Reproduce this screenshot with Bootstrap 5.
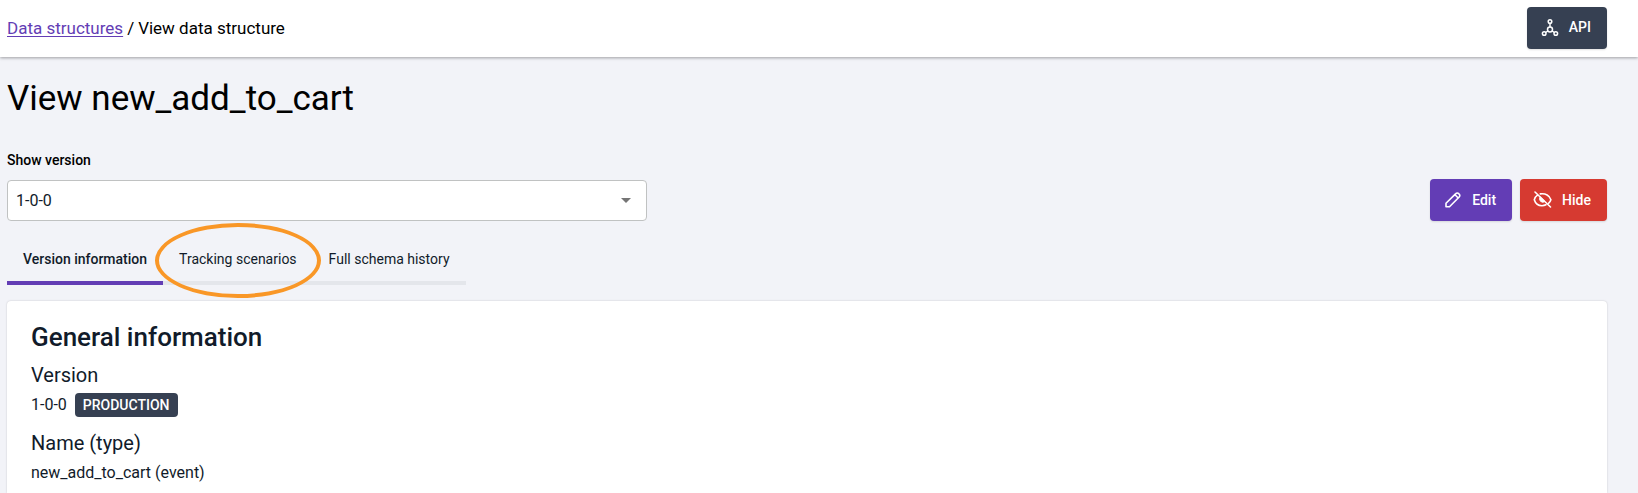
<!DOCTYPE html>
<html lang="en">
<head>
<meta charset="utf-8">
<meta name="viewport" content="width=device-width, initial-scale=1">
<title>View data structure</title>
<link rel="stylesheet" href="https://cdn.jsdelivr.net/npm/bootstrap@5.3.0/dist/css/bootstrap.min.css">
<style>
  body { font-family: Roboto, "Liberation Sans", sans-serif; font-size: 16px; line-height: 24px; color: #111b2a; background: #f2f3f8; }
  .topbar { height: 57px; padding-bottom: 2px; box-shadow: 0 1px 3px rgba(0,0,0,.35); }
  .page-x { padding-left: 7px; padding-right: 31px; }
  .crumbs { font-size: 17px; color: #000; }
  .crumbs .breadcrumb { --bs-breadcrumb-item-padding-x: 4px; --bs-breadcrumb-divider-color: #000; }
  .crumbs a { color: #633db5; text-underline-offset: 2px; }
  .action { height: 42px; padding: 0 16px; border: 0; border-radius: 4px; color: #fff; font-size: 14px; font-weight: 500; box-shadow: 0 1px 2px rgba(0,0,0,.12); }
  .action:hover { color: #fff; filter: brightness(.92); }
  .action-dark { background: #364052 !important; }
  .action-edit { background: #633db5 !important; }
  .action-hide { background: #d63a31 !important; padding: 0 16px 0 12px; }
  .title { font-size: 35px; line-height: 40px; font-weight: 400; color: #000; padding-top: 22px; margin-bottom: 29px; }
  .field-label { font-size: 14px; font-weight: 500; color: #000; margin-bottom: 8px; }
  .version-select { height: 41px; padding: 0 40px 0 8px; border: 1px solid #c0c2c2; border-radius: 4px; font-size: 16px; color: #111b2a;
    background-image: url("data:image/svg+xml,%3Csvg xmlns='http://www.w3.org/2000/svg' viewBox='0 0 10 5'%3E%3Cpath fill='%23757575' d='M0 0h10L5 5z'/%3E%3C/svg%3E");
    background-size: 10px 5px; background-position: right 15px center; }
  .version-field { flex: 0 1 640px; }
  .tabs { margin-top: 12px; }
  .tabs .nav-link { height: 52px; padding: 4px 16px 0; border: 0 solid #e4e6eb; border-bottom-width: 4px; border-radius: 0; background: none; color: #111b2a; font-size: 14px; }
  .tabs .nav-link.active { border-color: #633db5; font-weight: 500; }
  .highlight-ring { top: -10px; left: -8px; right: -8px; height: 75px; border: 4px solid #f99727; border-radius: 50%; pointer-events: none; z-index: 2; }
  .panel { margin-top: 16px; padding: 20px 24px 0; background: #fff; border-radius: 4px 4px 0 0; box-shadow: 0 0 2px rgba(0,0,0,.2); }
  .panel h2 { font-size: 26px; line-height: 32px; font-weight: 500; margin-bottom: 8px; }
  .panel dt { font-size: 20px; line-height: 28px; font-weight: 400; margin-bottom: 4px; }
  .panel dd { line-height: 24px; margin-bottom: 12px; }
  .status { height: 24px; padding: 0 8px; border-radius: 4px; background: #364052; font-size: 14px; line-height: 24px; font-weight: 500; }
</style>
</head>
<body class="min-vh-100 d-flex flex-column">
<header class="topbar page-x bg-white d-flex align-items-center justify-content-between flex-shrink-0">
  <nav class="crumbs" aria-label="breadcrumb">
    <ol class="breadcrumb mb-0">
      <li class="breadcrumb-item"><a href="#">Data structures</a></li>
      <li class="breadcrumb-item text-black" aria-current="page">View data structure</li>
    </ol>
  </nav>
  <button type="button" class="btn action action-dark d-flex align-items-center gap-2">
    <svg width="18" height="18" viewBox="0 0 18 18" fill="none" stroke="#fff" stroke-width="1.5" aria-hidden="true" overflow="visible"><circle cx="7" cy="2.500" r="1.800"/><circle cx="7" cy="10.500" r="2.500"/><circle cx="1.200" cy="14.500" r="1.800"/><circle cx="12.800" cy="14.500" r="1.800"/><path d="M7 4.300v3.700M4.800 12l-2.200 1.500M9.200 12l2.200 1.500"/></svg>
    <span>API</span>
  </button>
</header>

<main class="page-x flex-grow-1 d-flex flex-column">
  <h1 class="title">View new_add_to_cart</h1>

  <div class="d-flex align-items-end justify-content-between gap-3">
    <div class="version-field">
      <label class="field-label d-block" for="version">Show version</label>
      <select class="form-select version-select" id="version"><option>1-0-0</option></select>
    </div>
    <div class="d-flex gap-2">
      <button type="button" class="btn action action-edit d-flex align-items-center gap-2">
        <svg width="18" height="18" viewBox="0 0 18 18" fill="none" stroke="#fff" stroke-width="1.600" stroke-linejoin="round" aria-hidden="true" overflow="visible"><path d="M0 15.800V12.300L9.800 2.600a2 2 0 0 1 2.900 0l.5.5a2 2 0 0 1 0 2.900L3.500 15.800zM9 3.700l3 3"/></svg>
        <span>Edit</span>
      </button>
      <button type="button" class="btn action action-hide d-flex align-items-center gap-2">
        <svg width="22" height="18" viewBox="0 0 22 18" fill="none" stroke="#fff" stroke-width="1.600" stroke-linecap="round" aria-hidden="true" overflow="visible"><path d="M3 1l15.500 15M5.500 4.200C3.900 5.300 2.700 7 2.300 8.700c1.200 4 4.200 6 7.700 6 1.500 0 2.800-.3 3.900-.9M8.300 2.900C13.500 2 17.700 4.700 18.900 8.700c-.5 1.500-1.200 2.600-2.200 3.500"/><path d="M8 6.200a3.300 3.300 0 0 0 4.600 4.500z" fill="#fff" stroke-width="1"/></svg>
        <span>Hide</span>
      </button>
    </div>
  </div>

  <ul class="tabs nav" role="tablist">
    <li class="nav-item" role="presentation"><button type="button" class="nav-link active" role="tab" aria-selected="true">Version information</button></li>
    <li class="nav-item position-relative" role="presentation"><button type="button" class="nav-link" role="tab" aria-selected="false">Tracking scenarios</button><span class="highlight-ring position-absolute"></span></li>
    <li class="nav-item" role="presentation"><button type="button" class="nav-link" role="tab" aria-selected="false">Full schema history</button></li>
  </ul>

  <section class="panel flex-grow-1">
    <h2>General information</h2>
    <dl class="mb-0">
      <dt>Version</dt>
      <dd class="d-flex gap-2"><span>1-0-0</span><span class="badge status">PRODUCTION</span></dd>
      <dt>Name (type)</dt>
      <dd class="mb-0">new_add_to_cart (event)</dd>
    </dl>
  </section>
</main>
<script src="https://cdn.jsdelivr.net/npm/bootstrap@5.3.0/dist/js/bootstrap.bundle.min.js"></script>
</body>
</html>
